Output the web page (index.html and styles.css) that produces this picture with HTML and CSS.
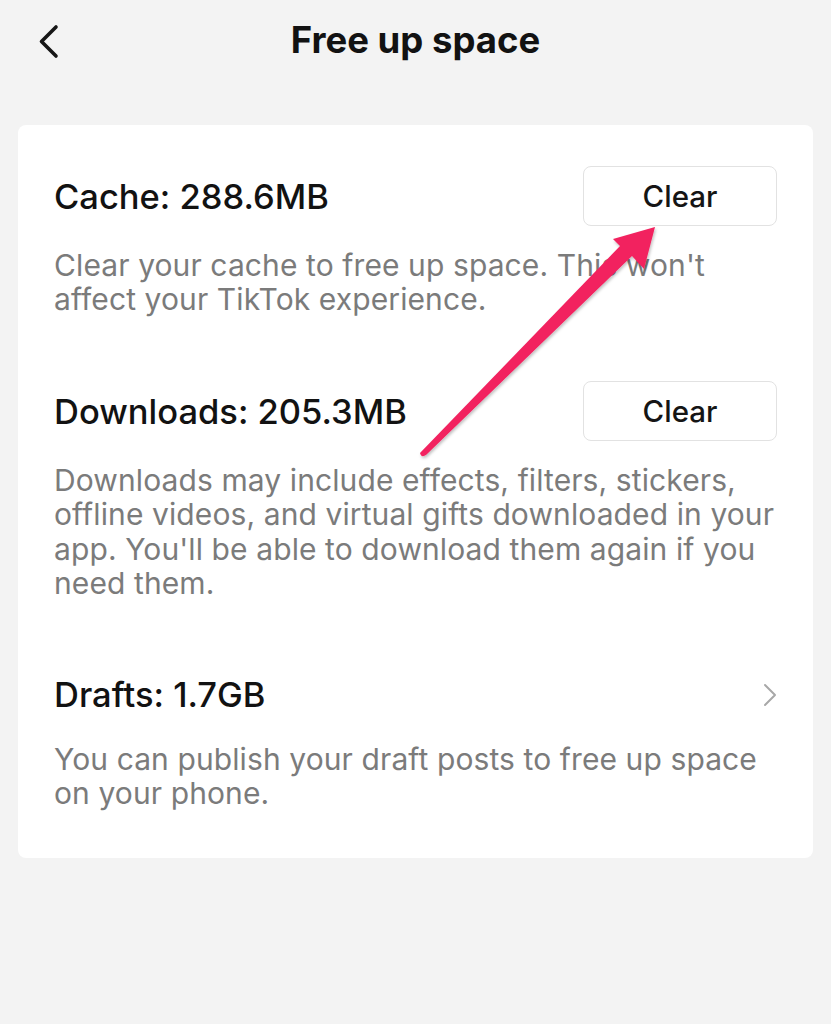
FILE: index.html
```html
<!DOCTYPE html>
<html lang="en">
<head>
<meta charset="utf-8">
<title>Free up space</title>
<link rel="stylesheet" href="styles.css">
</head>
<body>
<div class="page">
  <header class="topbar">
    <button class="back" aria-label="Back">
      <svg width="24" height="36" viewBox="0 0 24 36"><path d="M18 3 L3.5 17.5 L18 32" fill="none" stroke="#161616" stroke-width="3.6" stroke-linecap="round" stroke-linejoin="round"/></svg>
    </button>
    <h1 class="title">Free up space</h1>
  </header>

  <main class="card">
    <section class="item">
      <div class="item-head">
        <h2 class="item-title">Cache: 288.6MB</h2>
        <button class="clear">Clear</button>
      </div>
      <p class="item-desc">Clear your cache to free up space. This won't affect your TikTok experience.</p>
    </section>

    <section class="item">
      <div class="item-head">
        <h2 class="item-title">Downloads: 205.3MB</h2>
        <button class="clear">Clear</button>
      </div>
      <p class="item-desc">Downloads may include effects, filters, stickers, offline videos, and virtual gifts downloaded in your app. You'll be able to download them again if you need them.</p>
    </section>

    <section class="item item-link">
      <div class="item-head">
        <h2 class="item-title">Drafts: 1.7GB</h2>
        <svg class="chev" width="14" height="24" viewBox="0 0 14 24"><path d="M2 2 L12 12 L2 22" fill="none" stroke="#a8a8a8" stroke-width="2" stroke-linecap="round" stroke-linejoin="round"/></svg>
      </div>
      <p class="item-desc">You can publish your draft posts to free up space on your phone.</p>
    </section>
  </main>

  <svg class="annot" width="831" height="1024" viewBox="0 0 831 1024">
    <defs>
      <filter id="sh" x="-10%" y="-10%" width="120%" height="120%">
        <feDropShadow dx="1" dy="2" stdDeviation="1.5" flood-color="#000" flood-opacity="0.25"/>
      </filter>
    </defs>
    <path filter="url(#sh)" fill="#f2215f" d="M655 227 L644 269 L632 256 L426 455 Q421 458 420 453 L620 246 L613 239 Z"/>
  </svg>
</div>
</body>
</html>
```

FILE: styles.css
```css
html, body {
  margin: 0;
  padding: 0;
  background: #f3f3f3;
}
body {
  font-family: Inter, "Noto Sans", "Liberation Sans", sans-serif;
  color: #121212;
}
.page {
  position: relative;
  width: 831px;
  height: 1024px;
  overflow: hidden;
}
.topbar {
  position: relative;
  height: 82px;
  display: flex;
  align-items: center;
  justify-content: center;
}
.back {
  position: absolute;
  left: 38px;
  top: 24px;
  padding: 0;
  border: 0;
  background: none;
  display: flex;
}
.title {
  margin: 0;
  font-size: 36.5px;
  font-weight: 700;
  letter-spacing: 0;
  position: relative;
  top: -1px;
}
.card {
  margin: 43px 18px 0 18px;
  background: #fff;
  border-radius: 8px;
  padding: 41px 36px 48px 36px;
  display: flex;
  flex-direction: column;
  gap: 64.5px;
}
.item-head {
  display: flex;
  align-items: center;
  justify-content: space-between;
  height: 60px;
}
.item-title {
  margin: 0;
  font-size: 34.5px;
  font-weight: 500;
  letter-spacing: 0;
}
.clear {
  width: 194px;
  height: 60px;
  border: 1.5px solid #e2e2e2;
  border-radius: 8px;
  background: #fff;
  font-family: inherit;
  font-size: 29.5px;
  font-weight: 500;
  color: #151515;
  letter-spacing: 0;
  padding: 0;
}
.item-desc {
  margin: 22px 0 0 0;
  font-size: 30px;
  line-height: 34.3px;
  color: #7b7b7b;
  letter-spacing: 0.1px;
}
.item-link .item-desc {
  margin-top: 17px;
}
.annot {
  position: absolute;
  left: 0;
  top: 0;
  pointer-events: none;
}
```
